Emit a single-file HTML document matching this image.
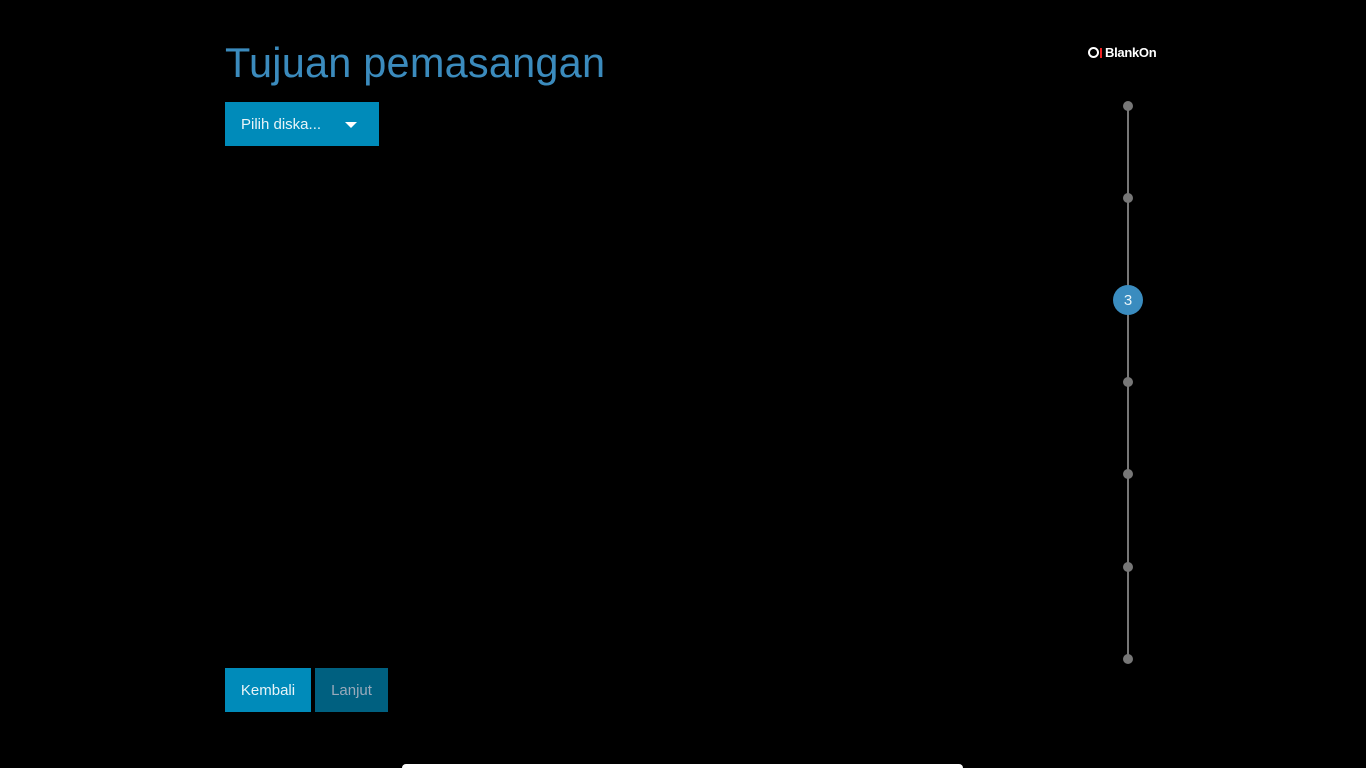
<!DOCTYPE html>
<html><head><meta charset="utf-8"><style>
html,body{margin:0;padding:0;background:#000;width:1366px;height:768px;overflow:hidden;font-family:"Liberation Sans","DejaVu Sans",sans-serif}
.t{position:absolute;left:225px;top:39px;font-size:41.5px;color:#3b8bbd;letter-spacing:0.2px}
.btn{position:absolute;background:#008bba;color:#e8f4f8;font-size:15px;line-height:46px;height:44px}
.dot{position:absolute;left:1123px;width:10px;height:10px;border-radius:50%;background:#777}
</style></head><body>
<div class="t">Tujuan pemasangan</div>
<div class="btn" style="left:225px;top:102px;width:154px"><span style="position:absolute;left:16px">Pilih diska...</span>
<svg style="position:absolute;left:119px;top:19px" width="14" height="8"><path d="M1 1h12L7 7z" fill="#fff"/></svg></div>
<div class="btn" style="left:225px;top:668px;width:86px;text-align:center">Kembali</div>
<div class="btn" style="left:315px;top:668px;width:73px;text-align:center;background:#006080;color:#9ab">Lanjut</div>
<div style="position:absolute;left:1088px;top:45px;color:#fff;font-size:13px;font-weight:bold;letter-spacing:-0.3px"><span style="display:inline-block;width:7px;height:7px;border:2px solid #fff;border-radius:50%;vertical-align:-1px"></span><span style="display:inline-block;width:2px;height:10px;background:#e22;margin:0 3px 0 1px;vertical-align:-1px"></span>BlankOn</div>
<div style="position:absolute;left:1127px;top:106px;width:2px;height:553px;background:#777"></div>
<div class="dot" style="top:101px"></div>
<div class="dot" style="top:193px"></div>
<div style="position:absolute;left:1113px;top:285px;width:30px;height:30px;border-radius:50%;background:#3a8cbf;color:#e8f4f8;font-size:15px;text-align:center;line-height:31px">3</div>
<div class="dot" style="top:377px"></div>
<div class="dot" style="top:469px"></div>
<div class="dot" style="top:562px"></div>
<div class="dot" style="top:654px"></div>
<div style="position:absolute;left:402px;top:764px;width:561px;height:4px;background:#fff;border-radius:8px 8px 0 0"></div>
</body></html>
